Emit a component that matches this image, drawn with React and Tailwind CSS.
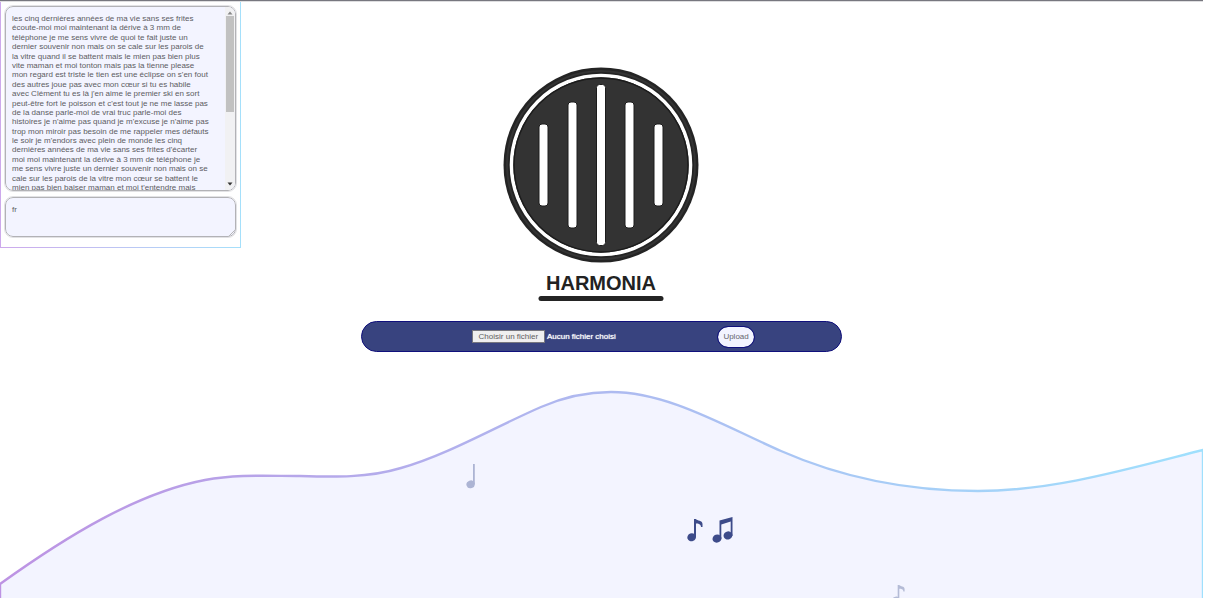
const lyrics = `les cinq dernières années de ma vie sans ses frites
écoute-moi moi maintenant la dérive à 3 mm de
téléphone je me sens vivre de quoi te fait juste un
dernier souvenir non mais on se cale sur les parois de
la vitre quand il se battent mais le mien pas bien plus
vite maman et moi tonton mais pas la tienne please
mon regard est triste le tien est une éclipse on s'en fout
des autres joue pas avec mon cœur si tu es habile
avec Clément tu es là j'en aime le premier ski en sort
peut-être fort le poisson et c'est tout je ne me lasse pas
de la danse parle-moi de vrai truc parle-moi des
histoires je n'aime pas quand je m'excuse je n'aime pas
trop mon miroir pas besoin de me rappeler mes défauts
le soir je m'endors avec plein de monde les cinq
dernières années de ma vie sans ses frites d'écarter
moi moi maintenant la dérive à 3 mm de téléphone je
me sens vivre juste un dernier souvenir non mais on se
cale sur les parois de la vitre mon cœur se battent le
mien pas bien baiser maman et moi t'entendre mais`;

function Transcript() {
  return (
    <aside className="w-1/5 shrink-0 self-start bg-gradient-to-r from-[#cda9ec] to-[#a5e0fb] px-px pb-px">
      <div className="flex flex-col gap-1.5 bg-white px-1 pt-1 pb-2.5">
        <div className="flex h-[185px] overflow-hidden rounded-lg border border-[#b2b2b6] bg-[#f3f4ff] outline outline-[#e2e2e5]">
          <textarea
            aria-label="Paroles"
            defaultValue={lyrics}
            className="min-w-0 flex-1 resize-none overflow-auto whitespace-pre pt-[7px] pl-1.5 text-[8px] leading-[1.175] text-[#5c5c62] outline-none [scrollbar-width:none]"
          />
          <div aria-hidden="true" className="flex w-2.5 flex-col items-center bg-[#f1f1f3] py-1">
            <svg viewBox="0 0 6 4" className="h-1 w-1.5">
              <path d="M0.5 3.5L3 0.5L5.5 3.5Z" fill="#888" />
            </svg>
            <div className="mt-px h-24 w-2 bg-[#c1c1c1]" />
            <svg viewBox="0 0 6 4" className="mt-auto h-1 w-1.5">
              <path d="M0.5 0.5L3 3.5L5.5 0.5Z" fill="#333" />
            </svg>
          </div>
        </div>
        <div className="relative flex h-10 overflow-hidden rounded-lg border border-[#b2b2b6] bg-[#f3f4ff] outline outline-[#e2e2e5]">
          <textarea
            aria-label="Langue"
            defaultValue="fr"
            className="min-w-0 flex-1 resize-none px-1.5 pt-[7px] text-[8px] leading-[1.175] text-[#5c5c62] outline-none"
          />
          <svg viewBox="0 0 6 6" className="absolute right-0 bottom-0 size-1.5" aria-hidden="true">
            <path d="M0 6L6 0M3 6L6 3" stroke="#999" strokeWidth="0.7" />
          </svg>
        </div>
      </div>
    </aside>
  );
}

function Logo() {
  return (
    <svg viewBox="0 0 196 234" className="h-[234px] w-[196px]" role="img" aria-label="Harmonia">
      <circle cx="98" cy="98" r="97.5" fill="#242424" />
      <circle cx="98" cy="98" r="94" fill="none" stroke="#333" strokeWidth="2" />
      <circle cx="98" cy="98" r="89.5" fill="#333" stroke="#fff" strokeWidth="3.6" />
      <circle cx="98" cy="98" r="87" fill="none" stroke="#1c1c1c" strokeWidth="1.5" />
      <g fill="#fff" stroke="#1c1c1c" strokeWidth="1">
        <rect x="36" y="57" width="9" height="82" rx="3" />
        <rect x="65" y="35" width="9" height="126" rx="3" />
        <rect x="93.5" y="17.5" width="9" height="161" rx="3" />
        <rect x="122" y="35" width="9" height="126" rx="3" />
        <rect x="151" y="57" width="9" height="82" rx="3" />
      </g>
      <text x="98" y="223" textAnchor="middle" fontFamily="Liberation Sans, Arial, sans-serif" fontSize="20" fontWeight="700" fill="#222">
        HARMONIA
      </text>
      <rect x="35.5" y="229" width="125" height="5" rx="2.5" fill="#242424" />
    </svg>
  );
}

function UploadBar() {
  return (
    <form
      onSubmit={(e) => e.preventDefault()}
      className="flex h-[31px] w-2/3 items-center rounded-full border border-[#10107c] bg-[#38437f] pr-[87px] pl-[110px] text-[8px]"
    >
      <input id="audio" type="file" className="sr-only" />
      <label htmlFor="audio" className="flex items-center gap-0.5 whitespace-nowrap text-white">
        <span className="flex h-[13px] w-[73px] items-center justify-center border border-[#77777f] bg-[#efefef] text-[#606060]">
          Choisir un fichier
        </span>
        <span className="[text-shadow:0_0_1px_#fff]">Aucun fichier choisi</span>
      </label>
      <button type="submit" className="ml-auto h-5 w-9 rounded-full bg-[#f3f4ff] text-[#66666e] outline outline-[#10107c]">
        Upload
      </button>
    </form>
  );
}

function Wave() {
  return (
    <svg viewBox="0 0 1203 208" className="block w-full" aria-hidden="true">
      <defs>
        <linearGradient id="edge" x1="0" x2="1">
          <stop offset="0" stopColor="#bd93e3" />
          <stop offset="1" stopColor="#9fe0fd" />
        </linearGradient>
      </defs>
      <path
        d="M0 194C67 146 137 103 205 90C237 84 268 86 300 86C334 87 368 88 401 78C447 65 495 37 541 17C564 7 588 2 611 2C668 2 724 36 781 61C847 90 912 101 978 101C1053 101 1128 79 1203 60V215H0Z"
        fill="#f3f4ff"
        stroke="url(#edge)"
        strokeWidth="2.4"
      />
    </svg>
  );
}

function QuarterNote({ className }) {
  return (
    <svg viewBox="0 0 10 26" className={className} aria-hidden="true">
      <ellipse cx="4.6" cy="21.3" rx="4.2" ry="3.9" transform="rotate(-20 4.6 21.3)" />
      <path d="M7 1H8.8V21H7Z" />
    </svg>
  );
}

function EighthNote({ className }) {
  return (
    <svg viewBox="0 0 16 24" className={className} aria-hidden="true">
      <ellipse cx="4.6" cy="19.3" rx="4.3" ry="4" transform="rotate(-20 4.6 19.3)" />
      <path d="M7 1H9C10 3 15.5 2 15.5 6V9H14C14 6 11 5.5 9 5.5V19.5H7Z" />
    </svg>
  );
}

function BeamedNotes({ className }) {
  return (
    <svg viewBox="0 0 22 28" className={className} aria-hidden="true">
      <ellipse cx="5" cy="22.6" rx="4.5" ry="4" transform="rotate(-20 5 22.6)" />
      <ellipse cx="16" cy="19.4" rx="4.5" ry="4" transform="rotate(-20 16 19.4)" />
      <path d="M7.5 4.5L20.5 1V20H18.7V5.5L9.3 8.5V23H7.5Z" />
    </svg>
  );
}

export default function App() {
  return (
    <div className="min-h-screen overflow-hidden bg-white pr-[5px] font-['Liberation_Sans',Arial,sans-serif]">
      <div className="h-0.5 border-t border-[#77777f] bg-[#dedee0]" />
      <div className="flex">
        <Transcript />
        <main className="flex w-3/5 flex-col items-center pt-[65px]">
          <h1>
            <Logo />
          </h1>
          <div className="mt-5 flex w-full justify-center">
            <UploadBar />
          </div>
        </main>
      </div>
      <div className="relative mt-[38px]">
        <Wave />
        <QuarterNote className="absolute top-[73px] left-[466px] h-[26px] w-2.5 fill-[#acb4d4]" />
        <EighthNote className="absolute top-[128px] left-[687px] h-6 w-4 fill-[#3d4b8a]" />
        <BeamedNotes className="absolute top-[126px] left-[712px] h-7 w-[22px] fill-[#3d4b8a]" />
        <EighthNote className="absolute top-[194px] left-[892px] h-5 w-[13px] fill-[#b4bbd6]" />
      </div>
    </div>
  );
}
